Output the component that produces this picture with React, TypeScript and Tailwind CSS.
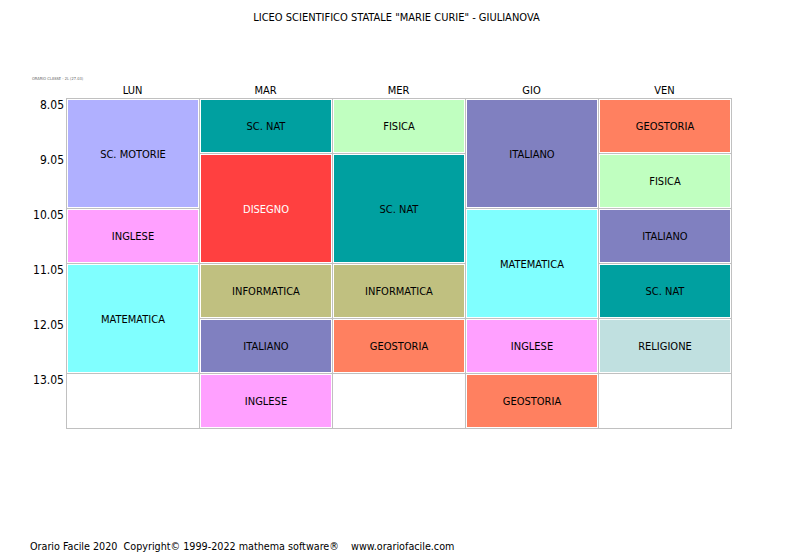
import React from "react";

type Cell = { label?: string; pos: string; bg: string; text?: string };

const cells: Cell[] = [
  // LUN
  { label: "SC. MOTORIE", pos: "col-start-1 row-start-1 row-span-2", bg: "bg-[#b0b0ff]" },
  { label: "INGLESE", pos: "col-start-1 row-start-3", bg: "bg-[#ffa0ff]" },
  { label: "MATEMATICA", pos: "col-start-1 row-start-4 row-span-2", bg: "bg-[#80ffff]" },
  { pos: "col-start-1 row-start-6", bg: "bg-white" },
  // MAR
  { label: "SC. NAT", pos: "col-start-2 row-start-1", bg: "bg-[#00a0a0]" },
  { label: "DISEGNO", pos: "col-start-2 row-start-2 row-span-2", bg: "bg-[#ff4040]", text: "text-white" },
  { label: "INFORMATICA", pos: "col-start-2 row-start-4", bg: "bg-[#c0c080]" },
  { label: "ITALIANO", pos: "col-start-2 row-start-5", bg: "bg-[#8080c0]" },
  { label: "INGLESE", pos: "col-start-2 row-start-6", bg: "bg-[#ffa0ff]" },
  // MER
  { label: "FISICA", pos: "col-start-3 row-start-1", bg: "bg-[#c0ffc0]" },
  { label: "SC. NAT", pos: "col-start-3 row-start-2 row-span-2", bg: "bg-[#00a0a0]" },
  { label: "INFORMATICA", pos: "col-start-3 row-start-4", bg: "bg-[#c0c080]" },
  { label: "GEOSTORIA", pos: "col-start-3 row-start-5", bg: "bg-[#ff8060]" },
  { pos: "col-start-3 row-start-6", bg: "bg-white" },
  // GIO
  { label: "ITALIANO", pos: "col-start-4 row-start-1 row-span-2", bg: "bg-[#8080c0]" },
  { label: "MATEMATICA", pos: "col-start-4 row-start-3 row-span-2", bg: "bg-[#80ffff]" },
  { label: "INGLESE", pos: "col-start-4 row-start-5", bg: "bg-[#ffa0ff]" },
  { label: "GEOSTORIA", pos: "col-start-4 row-start-6", bg: "bg-[#ff8060]" },
  // VEN
  { label: "GEOSTORIA", pos: "col-start-5 row-start-1", bg: "bg-[#ff8060]" },
  { label: "FISICA", pos: "col-start-5 row-start-2", bg: "bg-[#c0ffc0]" },
  { label: "ITALIANO", pos: "col-start-5 row-start-3", bg: "bg-[#8080c0]" },
  { label: "SC. NAT", pos: "col-start-5 row-start-4", bg: "bg-[#00a0a0]" },
  { label: "RELIGIONE", pos: "col-start-5 row-start-5", bg: "bg-[#c0e0e0]" },
  { pos: "col-start-5 row-start-6", bg: "bg-white" },
];

const days = ["LUN", "MAR", "MER", "GIO", "VEN"];
const times = ["8.05", "9.05", "10.05", "11.05", "12.05", "13.05"];

export default function App() {
  return (
    <div className="w-[793px] h-[559px] bg-white text-black flex flex-col font-['DejaVu_Sans_Condensed','DejaVu_Sans',sans-serif] font-stretch-condensed text-[11px] leading-[14px]">
      <div className="pt-[11px] text-center">LICEO SCIENTIFICO STATALE "MARIE CURIE" - GIULIANOVA</div>
      <div className="mt-[51px] pl-[32px] text-[4px] leading-[6px] text-[#666]">ORARIO CLASSE - 2L (27.03)</div>
      <div className="mt-[2px] leading-[13px] pl-[66px] grid grid-cols-[repeat(5,133px)]">
        {days.map((d) => (
          <div key={d} className="text-center">{d}</div>
        ))}
      </div>
      <div className="mt-[1px] flex">
        <div className="w-[66px] flex flex-col">
          {times.map((t) => (
            <div key={t} className="h-[55px] text-right pr-[2px] text-[12px]">{t}</div>
          ))}
        </div>
        <div className="grid grid-cols-[repeat(5,133px)] grid-rows-[repeat(6,55px)] border-l border-t border-[#c0c0c0]">
          {cells.map((c, i) => (
            <div key={i} className={`${c.pos} border-r border-b border-[#c0c0c0] p-[1px]`}>
              <div className={`${c.bg} ${c.text ?? ""} h-full pt-[2px] flex items-center justify-center`}>
                {c.label}
              </div>
            </div>
          ))}
        </div>
      </div>
      <div className="mt-auto pb-[5px] pl-[30px] whitespace-pre text-[10.7px]">
        {"Orario Facile 2020  Copyright© 1999-2022 mathema software®    www.orariofacile.com"}
      </div>
    </div>
  );
}
